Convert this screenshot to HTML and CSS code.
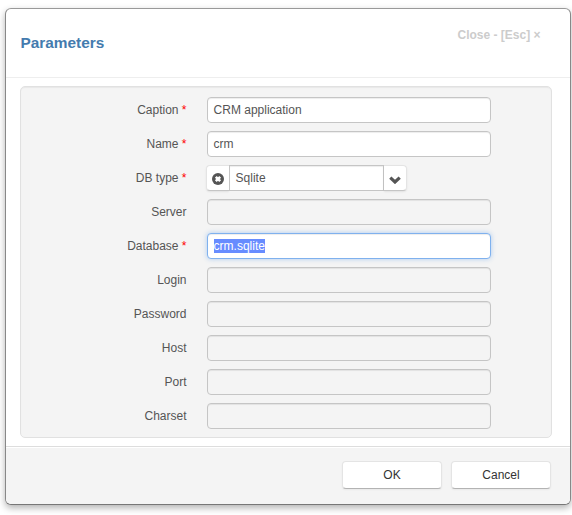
FILE: index.html
```html
<!DOCTYPE html>
<html lang="en">
<head>
<meta charset="utf-8">
<title>Parameters</title>
<link rel="stylesheet" href="styles.css">
</head>
<body>
<div class="modal">
  <header class="modal-header">
    <h3>Parameters</h3>
    <a class="close">Close - [Esc] ×</a>
  </header>
  <main class="modal-body">
    <form class="well">
      <div class="row"><label>Caption <i>*</i></label><div class="field">CRM application</div></div>
      <div class="row"><label>Name <i>*</i></label><div class="field">crm</div></div>
      <div class="row"><label>DB type <i>*</i></label>
        <div class="combo">
          <span class="combo-btn clear"><svg width="12" height="12" viewBox="0 0 12 12"><circle cx="6" cy="6" r="6" fill="#555"/><path d="M3.8 3.8L8.2 8.2M8.2 3.8L3.8 8.2" stroke="#fff" stroke-width="2.6"/></svg></span>
          <div class="combo-value">Sqlite</div>
          <span class="combo-btn toggle"><svg width="12" height="8" viewBox="0 0 12 8"><path d="M1.3 1.6L6 6L10.7 1.6" fill="none" stroke="#555" stroke-width="3.2"/></svg></span>
        </div>
      </div>
      <div class="row"><label>Server</label><div class="field disabled"></div></div>
      <div class="row"><label>Database <i>*</i></label><div class="field focused"><span class="selected">crm.sqlite</span></div></div>
      <div class="row"><label>Login</label><div class="field disabled"></div></div>
      <div class="row"><label>Password</label><div class="field disabled"></div></div>
      <div class="row"><label>Host</label><div class="field disabled"></div></div>
      <div class="row"><label>Port</label><div class="field disabled"></div></div>
      <div class="row"><label>Charset</label><div class="field disabled"></div></div>
    </form>
  </main>
  <footer class="modal-footer">
    <button class="btn">OK</button>
    <button class="btn">Cancel</button>
  </footer>
</div>
</body>
</html>
```
FILE: styles.css
```css
* { box-sizing: border-box; }
body {
  margin: 0;
  height: 515px;
  overflow: hidden;
  padding: 8px 1px 0 5px;
  background: #fff;
  color: #555;
  font: 12px/18px "Liberation Sans", Arial, sans-serif;
}
.modal {
  width: 566px;
  height: 497px;
  display: flex;
  flex-direction: column;
  border: 1px solid #888;
  border-top-color: #999;
  border-bottom-color: #777;
  border-radius: 6px;
  background: #fff;
  box-shadow: 0 3px 7px rgba(0, 0, 0, .3);
  overflow: hidden;
}
.modal-header {
  height: 69px;
  display: flex;
  justify-content: space-between;
  padding: 17px 29.5px 0 14.5px;
  border-bottom: 1px solid #eee;
}
h3 {
  margin: 7px 0 0;
  color: #447bae;
  font-size: 15.4px;
  line-height: 20px;
}
.close { color: #ccc; font-weight: bold; }
.modal-body { height: 368px; padding: 8px 18px 0 14px; }
.well {
  height: 352px;
  margin: 0;
  padding: 10px 0 0;
  border: 1px solid #e1e1e1;
  border-radius: 5px;
  background: #f4f4f4;
  box-shadow: inset 0 1px 1px rgba(0, 0, 0, .05);
}
.row { display: flex; height: 26px; margin-bottom: 8px; }
label { width: 165.5px; margin-right: 20.5px; padding-top: 4px; text-align: right; }
label i { color: #f00; font-style: normal; }
.field {
  width: 284px;
  height: 26px;
  padding: 3px 5.6px;
  border: 1px solid #c5c5c5;
  border-radius: 4px;
  background: #fff;
  box-shadow: inset 0 1px 1px rgba(0, 0, 0, .075);
}
.disabled { background: #f4f4f4; }
.focused {
  border-color: #7fb1ee;
  box-shadow: inset 0 1px 1px rgba(0, 0, 0, .075), 0 0 5px rgba(82, 150, 236, .45);
}
.selected { background: #678cff; color: #fff; }
.combo { display: flex; width: 201px; height: 26px; margin-left: -1px; }
.combo-btn {
  width: 23px;
  display: flex;
  align-items: center;
  justify-content: center;
  padding-top: 2px;
  border: 1px solid #e4e4e4;
  border-bottom-color: #c5c5c5;
  background: #fff;
  box-shadow: 0 1px 2px rgba(0, 0, 0, .08);
}
.clear { border-right: 0; border-radius: 4px 0 0 4px; }
.toggle { border-left: 0; border-radius: 0 4px 4px 0; padding: 3px 1px 0 0; }
.combo-value {
  width: 155px;
  padding: 3px 5.6px;
  border: 1px solid #c5c5c5;
  background: #fff;
  box-shadow: inset 0 1px 1px rgba(0, 0, 0, .075);
}
.modal-footer {
  flex: 1;
  display: flex;
  justify-content: flex-end;
  gap: 9px;
  padding: 14px 19px 0 0;
  border-top: 1px solid #ddd;
  background: #f4f4f4;
  box-shadow: inset 0 1px 0 #fff;
}
.btn {
  width: 100px;
  height: 28px;
  padding: 0;
  border: 1px solid #e4e4e4;
  border-bottom-color: #b3b3b3;
  border-radius: 4px;
  background: #fff;
  color: #333;
  font: inherit;
  box-shadow: 0 1px 2px rgba(0, 0, 0, .05);
}
```
